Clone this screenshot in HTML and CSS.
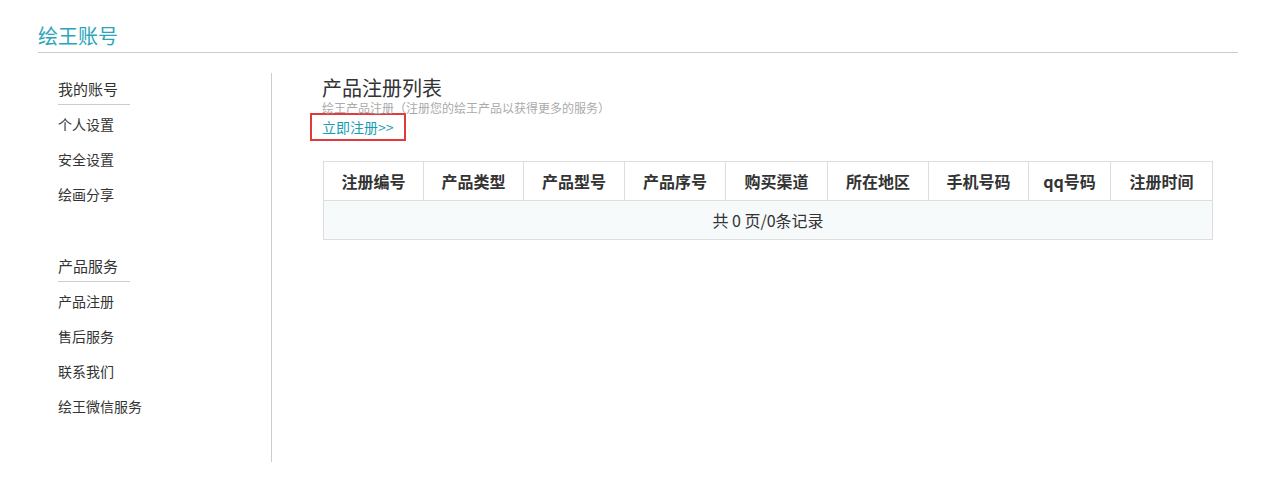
FILE: index.html
```html
<!DOCTYPE html>
<html lang="zh-CN">

<head>
    <meta charset="UTF-8">
    <title>绘王账号</title>
    <link rel="stylesheet" href="styles.css">
</head>

<body>
    <div class="header">
        <h1>绘王账号</h1>
    </div>
    <div class="wrap">
        <div class="side">
            <div class="group">
                <h3>我的账号</h3>
                <ul>
                    <li><a href="#">个人设置</a></li>
                    <li><a href="#">安全设置</a></li>
                    <li><a href="#">绘画分享</a></li>
                </ul>
            </div>
            <div class="group">
                <h3>产品服务</h3>
                <ul>
                    <li><a href="#">产品注册</a></li>
                    <li><a href="#">售后服务</a></li>
                    <li><a href="#">联系我们</a></li>
                    <li><a href="#">绘王微信服务</a></li>
                </ul>
            </div>
        </div>
        <div class="main">
            <h2>产品注册列表</h2>
            <p class="tip">绘王产品注册（注册您的绘王产品以获得更多的服务）</p>
            <a class="reg" href="#">立即注册&gt;&gt;</a>
            <table class="list">
                <thead>
                    <tr>
                        <th class="c1">注册编号</th>
                        <th class="c1">产品类型</th>
                        <th class="c2">产品型号</th>
                        <th class="c2">产品序号</th>
                        <th class="c3">购买渠道</th>
                        <th class="c2">所在地区</th>
                        <th class="c1">手机号码</th>
                        <th class="c4">qq号码</th>
                        <th>注册时间</th>
                    </tr>
                </thead>
                <tbody>
                    <tr>
                        <td colspan="9">共 0 页/0条记录</td>
                    </tr>
                </tbody>
            </table>
        </div>
    </div>
</body>

</html>
```

FILE: styles.css
```css
* {
    margin: 0;
    padding: 0;
    list-style: none;
}

body {
    font-family: "Microsoft YaHei", "Noto Sans CJK SC", "Liberation Sans", sans-serif;
    color: #333;
    background: #fff;
}

a {
    text-decoration: none;
}

.header {
    width: 1200px;
    margin-left: 38px;
    padding-top: 22px;
    border-bottom: 1px solid #ccc;
}

.header h1 {
    font-size: 20px;
    font-weight: normal;
    line-height: 28px;
    height: 30px;
    color: #2aa5b9;
}

.wrap {
    display: flex;
    margin-left: 38px;
    padding-top: 20px;
}

.side {
    width: 234px;
    height: 389px;
    border-right: 1px solid #ccc;
    box-sizing: border-box;
    padding-left: 20px;
}

.group {
    margin-bottom: 40px;
}

.group h3 {
    display: inline-block;
    font-size: 15px;
    font-weight: normal;
    line-height: 22px;
    padding: 5px 0 4px;
    min-width: 72px;
    border-bottom: 1px solid #ccc;
    color: #333;
}

.group li {
    height: 35px;
    line-height: 36px;
}

.group li a {
    font-size: 14px;
    color: #333;
}

.main {
    padding-left: 50px;
}

.main h2 {
    font-size: 20px;
    font-weight: normal;
    line-height: 22px;
    padding-top: 4px;
    color: #333;
}

.tip {
    padding-top: 1px;
    font-size: 12px;
    line-height: 16px;
    color: #aaa;
}

.reg {
    display: block;
    width: max-content;
    margin: -3px 0 0 -12px;
    padding: 0 10px;
    height: 24px;
    line-height: 24px;
    font-size: 14px;
    color: #1a9bb4;
    border: 2px solid #e23a3a;
}

.list {
    margin: 20px 0 0 1px;
    width: 890px;
    border-collapse: collapse;
    font-size: 16px;
}

.list th,
.list td {
    border: 1px solid #ddd;
    height: 38px;
    text-align: center;
    color: #333;
}

.list th {
    font-weight: bold;
    background: #fff;
}

.list .c1 {
    width: 99px;
}

.list .c2 {
    width: 100px;
}

.list .c3 {
    width: 101px;
}

.list .c4 {
    width: 81px;
}

.list td {
    background: #f7fafb;
    font-weight: normal;
}
```
